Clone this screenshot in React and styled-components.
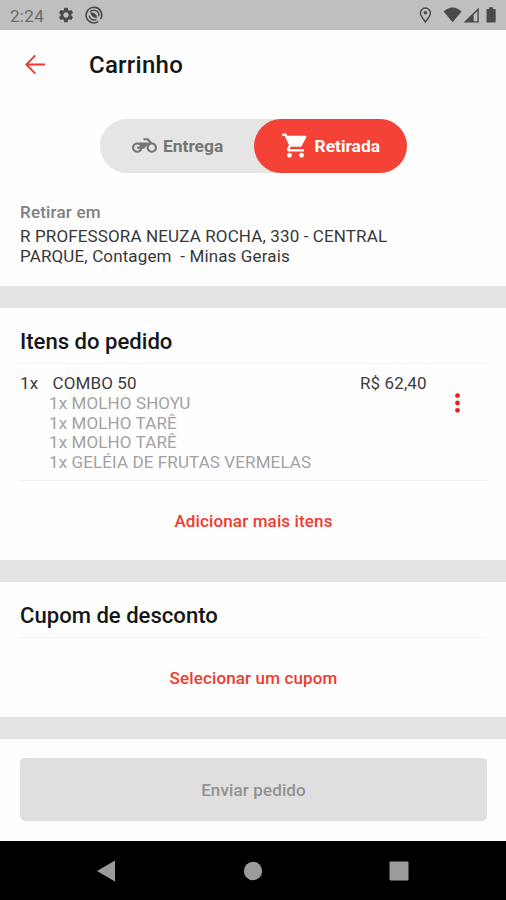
import styled, { createGlobalStyle } from "styled-components";
import { MdSettings, MdShoppingCart } from "react-icons/md";

const GlobalStyle = createGlobalStyle`
  * {
    box-sizing: border-box;
  }

  body {
    margin: 0;
    background: #fff;
    font-family: Roboto, "Liberation Sans", sans-serif;
  }
`;

const Screen = styled.div`
  display: flex;
  flex-direction: column;
  width: 506px;
  height: 900px;
  background: #fefefe;
  overflow: hidden;
`;

const StatusBar = styled.div`
  display: flex;
  justify-content: space-between;
  height: 30px;
  padding: 0 8px 0 10px;
  background: #bfbfbf;
  color: #4a4a4a;
`;

const StatusGroup = styled.div`
  display: flex;
  align-items: center;
  gap: ${({ $gap }) => $gap || "0"};

  svg {
    display: block;
  }
`;

const Clock = styled.span`
  width: 47px;
  font-size: 17px;
  letter-spacing: 0.3px;
  line-height: 30px;
  padding-top: 2px;
  color: #6a6a6a;
`;

const Header = styled.header`
  display: flex;
  align-items: center;
  height: 70px;
  padding-left: 24px;
`;

const BackButton = styled.button`
  width: 65px;
  padding: 0;
  border: 0;
  background: none;
  text-align: left;

  svg {
    display: block;
  }
`;

const Title = styled.h1`
  margin: 0;
  font-size: 24px;
  font-weight: 500;
  letter-spacing: 0.25px;
  color: #161616;
`;

const Toggle = styled.div`
  display: flex;
  width: 307px;
  height: 54px;
  margin: 19px 0 0 100px;
  border-radius: 27px;
  background: #e5e5e5;
`;

const ToggleOption = styled.button`
  display: flex;
  align-items: center;
  gap: ${({ $active }) => ($active ? "5px" : "6px")};
  width: ${({ $active }) => ($active ? "153.5px" : "153.5px")};
  padding: 0 0 1px ${({ $active }) => ($active ? "27px" : "32px")};
  border: 0;
  border-radius: 27px;
  background: ${({ $active }) => ($active ? "#f44336" : "transparent")};
  color: ${({ $active }) => ($active ? "#fff" : "#757575")};
  font-family: inherit;
  font-size: 17.4px;
  font-weight: 700;
`;

const Address = styled.section`
  height: 113px;
  padding: 29px 20px 0;
`;

const AddressLabel = styled.div`
  font-size: 17px;
  font-weight: 500;
  line-height: 20px;
  letter-spacing: 0.2px;
  color: #808080;
`;

const AddressText = styled.p`
  margin: 5px 0 0;
  font-size: 17px;
  line-height: 19.6px;
  letter-spacing: 0.13px;
  white-space: pre;
  color: #383838;
`;

const Divider = styled.div`
  height: 22px;
  flex-shrink: 0;
  background: #e4e4e4;
`;

const Section = styled.section`
  height: ${({ $height }) => $height};
  padding: 20px 19px 0 20px;
`;

const SectionTitle = styled.h2`
  margin: 0;
  height: 36px;
  font-size: 22.1px;
  font-weight: 500;
  line-height: 27px;
  color: #161616;
  border-bottom: 1px solid #f3f3f3;
`;

const Item = styled.div`
  display: flex;
  height: 117px;
  padding-top: 9px;
  font-size: 17px;
  line-height: 20px;
  letter-spacing: 0.11px;
  color: #3c3c3c;
  border-bottom: 1px solid #f3f3f3;
`;

const ItemInfo = styled.div`
  width: 340px;
`;

const ItemName = styled.div`
  display: flex;
`;

const Quantity = styled.span`
  width: 32.5px;
`;

const Extras = styled.ul`
  margin: 1px 0 0;
  padding: 0 0 0 29px;
  list-style: none;
  line-height: 19.7px;
  color: #a2a2a2;
`;

const Price = styled.div`
  width: 93px;
`;

const MoreButton = styled.button`
  align-self: flex-start;
  margin-top: 19px;
  padding: 0;
  border: 0;
  background: none;

  svg {
    display: block;
  }
`;

const LinkButton = styled.button`
  display: block;
  width: 100%;
  height: 80px;
  padding: 0;
  border: 0;
  background: none;
  color: #f03a30;
  font-family: inherit;
  font-size: 17px;
  font-weight: 500;
  letter-spacing: 0.13px;
`;

const Footer = styled.footer`
  height: 102px;
  padding: 19px 19px 0 20px;
`;

const SubmitButton = styled.button`
  width: 100%;
  height: 63px;
  border: 0;
  border-radius: 5px;
  background: #dfdfdf;
  color: #929292;
  font-family: inherit;
  font-size: 17px;
  font-weight: 500;
  letter-spacing: 0.13px;
`;

const NavBar = styled.nav`
  display: flex;
  align-items: center;
  justify-content: space-between;
  flex: 1;
  padding: 1px 97px 0 96px;
  background: #000;
`;

const extras = [
  "1x MOLHO SHOYU",
  "1x MOLHO TARÊ",
  "1x MOLHO TARÊ",
  "1x GELÉIA DE FRUTAS VERMELAS",
];

const TargetIcon = () => (
  <svg width="18" height="18" viewBox="0 0 18 18" fill="none" stroke="#4a4a4a">
    <path d="M13.2 15.6A7.8 7.8 0 1 1 15.6 13.1" strokeWidth="1.6" />
    <path d="M5 6.2A4.9 4.9 0 0 1 13.7 10.2" strokeWidth="1.4" />
    <path d="M4.2 9.6A4.9 4.9 0 0 0 11.5 13.3" strokeWidth="1.4" />
    <path d="M5.6 6.8C8.4 6.2 11.6 8 12 11.6C9.2 12 6.4 10.4 5.6 6.8Z" fill="#4a4a4a" strokeWidth="0.4" />
  </svg>
);

const PhoneStatus = () => (
  <svg width="80" height="20" viewBox="0 0 80 20" fill="#4a4a4a">
    <path
      d="M7.4 17C5 13.6 2.4 10.8 2.4 8A5 5 0 0 1 12.4 8C12.4 10.8 9.8 13.6 7.4 17Z"
      fill="none"
      stroke="#4a4a4a"
      strokeWidth="1.4"
    />
    <circle cx="7.4" cy="7.8" r="1.8" />
    <path d="M25.6 6.6Q34.6 -1.4 43.6 6.6L34.6 17.2Z" />
    <path fillRule="evenodd" d="M45.5 17.5L60.8 2.4V17.5ZM55.6 9.8V16.2H59.4V5.9Z" />
    <path d="M71.2 2.3H75V4H76.9Q77.7 4 77.7 4.8V16.8Q77.7 17.6 76.9 17.6H69.3Q68.5 17.6 68.5 16.8V4.8Q68.5 4 69.3 4H71.2Z" />
  </svg>
);

const MotorcycleIcon = () => (
  <svg width="25" height="25" viewBox="0 0 24 24" fill="currentColor">
    <path d="M19.44 9.03L15.41 5H11v2h3.59l2 2H5c-2.8 0-5 2.2-5 5s2.2 5 5 5c2.46 0 4.45-1.69 4.9-4h1.65l2.77-2.77c-.21.54-.32 1.14-.32 1.77 0 2.8 2.2 5 5 5s5-2.2 5-5c0-2.65-1.97-4.77-4.56-4.97zM7.82 15C7.4 16.15 6.28 17 5 17c-1.63 0-3-1.37-3-3s1.37-3 3-3c1.28 0 2.4.85 2.82 2H5v2h2.82zM19 17c-1.66 0-3-1.34-3-3s1.34-3 3-3 3 1.34 3 3-1.34 3-3 3z" />
  </svg>
);

const BackIcon = () => (
  <svg width="22" height="22" viewBox="0 0 22 22" fill="none" stroke="#ee3a30" strokeWidth="1.9">
    <path d="M21 10.5H3M11.3 1.4L2.4 10.5L11.3 19.6" />
  </svg>
);

const DotsIcon = () => (
  <svg width="9" height="22" viewBox="0 0 9 22" fill="#ee1c1c">
    <circle cx="4.5" cy="3.6" r="2.4" />
    <circle cx="4.5" cy="11" r="2.4" />
    <circle cx="4.5" cy="18.3" r="2.4" />
  </svg>
);

const App = () => {
  return (
    <>
      <GlobalStyle />
      <Screen>
        <StatusBar>
          <StatusGroup>
            <Clock>2:24</Clock>
            <StatusGroup $gap="10px">
              <MdSettings size={18} />
              <TargetIcon />
            </StatusGroup>
          </StatusGroup>
          <StatusGroup>
            <PhoneStatus />
          </StatusGroup>
        </StatusBar>

        <Header>
          <BackButton>
            <BackIcon />
          </BackButton>
          <Title>Carrinho</Title>
        </Header>

        <Toggle>
          <ToggleOption>
            <MotorcycleIcon />
            Entrega
          </ToggleOption>
          <ToggleOption $active>
            <MdShoppingCart size={29} />
            Retirada
          </ToggleOption>
        </Toggle>

        <Address>
          <AddressLabel>Retirar em</AddressLabel>
          <AddressText>
            {"R PROFESSORA NEUZA ROCHA, 330 - CENTRAL\nPARQUE, Contagem  - Minas Gerais"}
          </AddressText>
        </Address>
        <Divider />

        <Section $height="252px">
          <SectionTitle>Itens do pedido</SectionTitle>
          <Item>
            <ItemInfo>
              <ItemName>
                <Quantity>1x</Quantity>
                COMBO 50
              </ItemName>
              <Extras>
                {extras.map((extra, index) => (
                  <li key={index}>{extra}</li>
                ))}
              </Extras>
            </ItemInfo>
            <Price>R$ 62,40</Price>
            <MoreButton>
              <DotsIcon />
            </MoreButton>
          </Item>
          <LinkButton>Adicionar mais itens</LinkButton>
        </Section>
        <Divider />

        <Section $height="135px">
          <SectionTitle>Cupom de desconto</SectionTitle>
          <LinkButton>Selecionar um cupom</LinkButton>
        </Section>
        <Divider />

        <Footer>
          <SubmitButton>Enviar pedido</SubmitButton>
        </Footer>

        <NavBar>
          <svg width="20" height="22" viewBox="0 0 20 22" fill="#9b9b9b">
            <path d="M1 11L19 0.5V21.5Z" />
          </svg>
          <svg width="20" height="20" viewBox="0 0 20 20" fill="#9b9b9b">
            <circle cx="10" cy="10" r="9.2" />
          </svg>
          <svg width="20" height="20" viewBox="0 0 20 20" fill="#9b9b9b">
            <rect x="0.5" y="0.5" width="19" height="19" rx="1" />
          </svg>
        </NavBar>
      </Screen>
    </>
  );
};

export default App;
